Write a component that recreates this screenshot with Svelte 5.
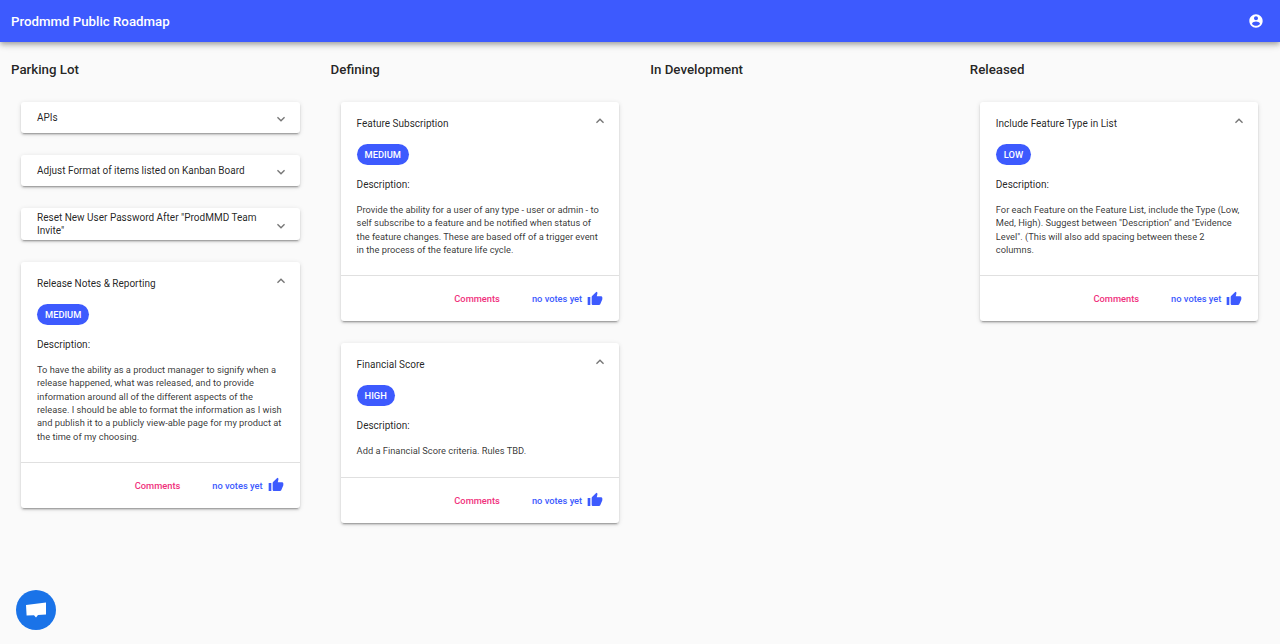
<script>
  const columns = [
    {
      title: 'Parking Lot',
      cards: [
        { title: 'APIs' },
        { title: 'Adjust Format of items listed on Kanban Board' },
        { title: 'Reset New User Password After "ProdMMD Team Invite"' },
        {
          title: 'Release Notes & Reporting',
          priority: 'Medium',
          description:
            'To have the ability as a product manager to signify when a release happened, what was released, and to provide information around all of the different aspects of the release. I should be able to format the information as I wish and publish it to a publicly view-able page for my product at the time of my choosing.'
        }
      ]
    },
    {
      title: 'Defining',
      cards: [
        {
          title: 'Feature Subscription',
          priority: 'Medium',
          description:
            'Provide the ability for a user of any type - user or admin - to self subscribe to a feature and be notified when status of the feature changes. These are based off of a trigger event in the process of the feature life cycle.'
        },
        {
          title: 'Financial Score',
          priority: 'High',
          description: 'Add a Financial Score criteria. Rules TBD.'
        }
      ]
    },
    { title: 'In Development', cards: [] },
    {
      title: 'Released',
      cards: [
        {
          title: 'Include Feature Type in List',
          priority: 'Low',
          description:
            'For each Feature on the Feature List, include the Type (Low, Med, High). Suggest between "Description" and "Evidence Level". (This will also add spacing between these 2 columns.'
        }
      ]
    }
  ];
</script>

<header class="app-bar">
  <h1>Prodmmd Public Roadmap</h1>
  <svg class="account" viewBox="0 0 24 24" aria-label="Account">
    <path d="M12 2C6.48 2 2 6.48 2 12s4.48 10 10 10 10-4.48 10-10S17.52 2 12 2zm0 3c1.66 0 3 1.34 3 3s-1.34 3-3 3-3-1.34-3-3 1.34-3 3-3zm0 14.2c-2.5 0-4.71-1.28-6-3.22.03-1.99 4-3.08 6-3.08 1.99 0 5.97 1.09 6 3.08-1.29 1.94-3.5 3.22-6 3.22z" />
  </svg>
</header>

<main class="board">
  {#each columns as column}
    <section class="column">
      <h2>{column.title}</h2>
      <div class="cards">
        {#each column.cards as card}
          <article class="card">
            <div class="card-head" class:open={card.description}>
              <span class="card-title">{card.title}</span>
              <svg class="chevron" viewBox="0 0 24 24">
                {#if card.description}
                  <path d="M7.41 15.41 12 10.83l4.59 4.58L18 14l-6-6-6 6z" />
                {:else}
                  <path d="M7.41 8.59 12 13.17l4.59-4.58L18 10l-6 6-6-6z" />
                {/if}
              </svg>
            </div>
            {#if card.description}
              <div class="card-body">
                <span class="chip">{card.priority}</span>
                <p class="label">Description:</p>
                <p class="description">{card.description}</p>
              </div>
              <footer class="card-foot">
                <span class="comments">Comments</span>
                <span class="votes">no votes yet</span>
                <svg class="thumb" viewBox="0 0 24 24">
                  <path d="M1 21h4V9H1v12zm22-11c0-1.1-.9-2-2-2h-6.31l.95-4.57.03-.32c0-.41-.17-.79-.44-1.06L14.17 1 7.59 7.59C7.22 7.95 7 8.45 7 9v10c0 1.1.9 2 2 2h9c.83 0 1.54-.5 1.84-1.22l3.02-7.05c.09-.23.14-.47.14-.73v-2z" />
                </svg>
              </footer>
            {/if}
          </article>
        {/each}
      </div>
    </section>
  {/each}
</main>

<button class="chat" aria-label="Chat">
  <svg viewBox="0 0 24 24">
    <path d="M2 7 22 4.4v12l-8 .6-2 2.6-2-2.4-7.4.2z" />
  </svg>
</button>

<style>
  :global(body) {
    background: #fafafa;
    font-family: Roboto, "Liberation Sans", sans-serif;
    color: rgba(0, 0, 0, 0.87);
  }

  .app-bar {
    height: 42px;
    box-sizing: border-box;
    padding: 0 16px 0 11px;
    display: flex;
    align-items: center;
    justify-content: space-between;
    background: #3d5afe;
    color: #fff;
    box-shadow: 0 2px 4px -1px rgba(0, 0, 0, 0.2), 0 4px 5px 0 rgba(0, 0, 0, 0.14), 0 1px 10px 0 rgba(0, 0, 0, 0.12);
  }

  h1 {
    margin: 0;
    font-size: 13.25px;
    font-weight: 500;
  }

  .account {
    width: 16px;
    height: 16px;
    fill: #fff;
  }

  .board {
    display: grid;
    grid-template-columns: repeat(4, 1fr);
    padding: 0 1.6px 40px 0;
  }

  .column {
    padding: 20px 20px 0 21px;
  }

  h2 {
    margin: 0 0 24px -10px;
    font-size: 13.3px;
    font-weight: 500;
    line-height: 16px;
  }

  .cards {
    display: flex;
    flex-direction: column;
    gap: 22px;
  }

  .card {
    background: #fff;
    border-radius: 3px;
    box-shadow: 0 3px 1px -2px rgba(0, 0, 0, 0.2), 0 2px 2px 0 rgba(0, 0, 0, 0.14), 0 1px 5px 0 rgba(0, 0, 0, 0.12);
  }

  .card-head {
    min-height: 31px;
    box-sizing: border-box;
    padding: 3px 11px 3px 16px;
    display: flex;
    align-items: center;
    justify-content: space-between;
    gap: 10px;
  }

  .card-head.open {
    height: 41px;
    padding-top: 5px;
  }

  .card-title {
    font-size: 10px;
    line-height: 13px;
  }

  .chevron {
    width: 16px;
    height: 16px;
    flex: none;
    margin-top: 3px;
    fill: rgba(0, 0, 0, 0.54);
  }

  .open .chevron {
    margin-top: -6px;
  }

  .card-body {
    padding: 0 16px 19px;
  }

  .chip {
    display: inline-block;
    height: 21px;
    padding: 0 8px;
    border-radius: 11px;
    background: #3d5afe;
    color: #fff;
    font-size: 9.3px;
    font-weight: 500;
    line-height: 21px;
    text-transform: uppercase;
  }

  p {
    margin: 0;
  }

  .label {
    margin-top: 12px;
    font-size: 10px;
    line-height: 16px;
  }

  .description {
    margin-top: 10px;
    font-size: 9.3px;
    line-height: 13.33px;
    color: rgba(0, 0, 0, 0.8);
  }

  .card-foot {
    height: 46px;
    box-sizing: border-box;
    padding: 0 16px;
    display: flex;
    align-items: center;
    justify-content: flex-end;
    border-top: 1px solid rgba(0, 0, 0, 0.12);
    font-size: 9.3px;
    font-weight: 500;
  }

  .comments {
    color: #f0307c;
    margin-right: 32px;
  }

  .votes {
    color: #3d5afe;
    margin-right: 5px;
  }

  .thumb {
    width: 16px;
    height: 16px;
    fill: #3d5afe;
  }

  .chat {
    position: fixed;
    left: 16px;
    bottom: 14px;
    width: 40px;
    height: 40px;
    padding: 0;
    border: 0;
    border-radius: 50%;
    background: #1a73e8;
    display: flex;
    align-items: center;
    justify-content: center;
  }

  .chat svg {
    width: 24px;
    height: 24px;
    fill: #fff;
  }
</style>
